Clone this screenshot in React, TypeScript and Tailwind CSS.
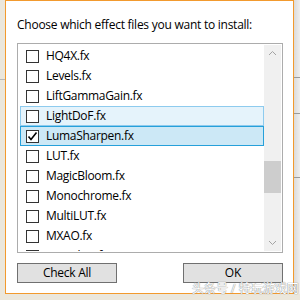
import React from "react";

const files = [
  "HQ4X.fx",
  "Levels.fx",
  "LiftGammaGain.fx",
  "LightDoF.fx",
  "LumaSharpen.fx",
  "LUT.fx",
  "MagicBloom.fx",
  "Monochrome.fx",
  "MultiLUT.fx",
  "MXAO.fx",
  "Nostalgia.fx",
];

function Row({ name, index }: { name: string; index: number }) {
  const hover = index === 3;
  const selected = index === 4;
  let cls = "border-transparent";
  if (hover) cls = "border-[#8ecbee] bg-[#e5f3fb]";
  if (selected) cls = "border-[#26a0da] bg-[#cce8f6]";
  return (
    <div className={`flex items-center h-[20px] shrink-0 border ${cls}`}>
      <div className="ml-[5px] w-[13px] h-[13px] border border-[#333] bg-white flex items-center justify-center">
        {selected && (
          <svg width="11" height="11" viewBox="0 0 11 11">
            <path d="M1.5 5.5 L4 8.5 L9.5 1.5" fill="none" stroke="#000" strokeWidth="1.6" />
          </svg>
        )}
      </div>
      <span className="ml-[7px] text-[12px] leading-none tracking-[-0.3px] text-black">{name}</span>
    </div>
  );
}

export default function App() {
  return (
    <div
      className="relative w-[300px] h-[300px] overflow-hidden bg-[#ebe7dc]"
      style={{ fontFamily: '"Open Sans", "Noto Sans CJK SC", sans-serif' }}
    >
      {/* bits of the window behind */}
      <div className="absolute left-0 top-[79px] w-[5px] h-px bg-[#b8b8b8]" />
      <div className="absolute right-0 top-0 w-[7px] h-[294px] bg-gradient-to-r from-[#d8d8d8] to-[#efefef]" />
      <div className="absolute right-0 top-[77px] w-[7px] h-px bg-[#9a9a9a]" />
      <div className="absolute right-0 top-[113px] w-[7px] h-px bg-[#9a9a9a]" />
      <div className="absolute right-0 top-[177px] w-[7px] h-px bg-[#9a9a9a]" />

      <div className="relative ml-[5px] w-[289px] h-[294px] bg-white border border-[#f29a2e] pl-[11px] pr-[10px] pt-[16px] flex flex-col">
        <div className="text-[12px] leading-[16px] tracking-[-0.25px] text-black">
          Choose which effect files you want to install:
        </div>

        <div className="mt-[10px] h-[210px] border border-[#acacac] flex p-px">
          <div className="flex-1 flex flex-col overflow-hidden pl-px pt-px">
            {files.map((f, i) => (
              <Row key={f} name={f} index={i} />
            ))}
          </div>
          <div className="w-[17px] bg-[#f0f0f0] flex flex-col items-center">
            <svg width="17" height="17" viewBox="0 0 17 17" className="shrink-0">
              <path d="M5 10 L8.5 6.5 L12 10" fill="none" stroke="#a3a3a3" strokeWidth="1" />
            </svg>
            <div className="mt-[99px] w-[17px] h-[32px] bg-[#cdcdcd]" />
            <div className="flex-1" />
            <svg width="17" height="17" viewBox="0 0 17 17" className="shrink-0">
              <path d="M5 7 L8.5 10.5 L12 7" fill="none" stroke="#a3a3a3" strokeWidth="1" />
            </svg>
          </div>
        </div>

        <div className="mt-[10px] flex justify-between">
          <button className="w-[100px] h-[20px] bg-[#e1e1e1] border border-[#707070] text-[12px] leading-none tracking-[-0.25px] text-black">
            Check All
          </button>
          <button className="w-[100px] h-[20px] bg-[#e1e1e1] border border-[#707070] text-[12px] leading-none text-black">
            OK
          </button>
        </div>
      </div>

      <div
        className="absolute left-[192px] top-[283px] text-[12px] leading-none text-white whitespace-nowrap"
        style={{ textShadow: "0 0 1px #8a8a8a, 0 0 1px #8a8a8a" }}
      >
        头条号 / 特玩游戏网
      </div>
    </div>
  );
}
